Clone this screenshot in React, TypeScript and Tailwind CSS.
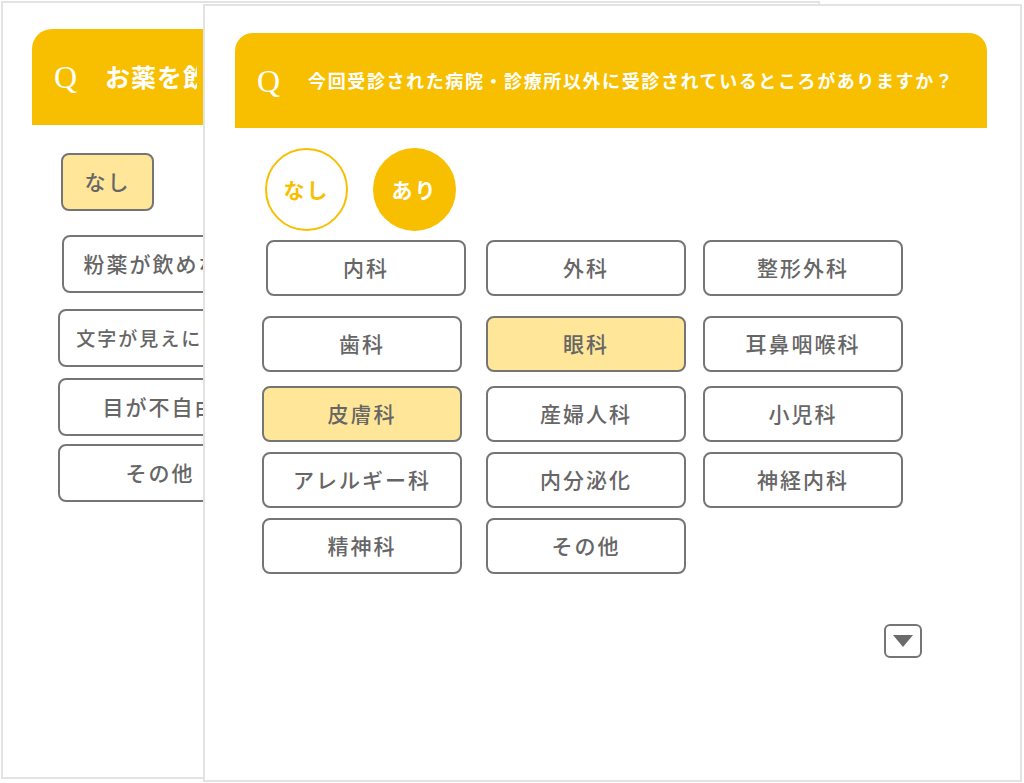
import React from "react";

const jp = "font-['Noto_Sans_CJK_JP','Noto_Sans',sans-serif]";

type Item = { label: string; on?: boolean };

const rows: { cls: string; items: Item[] }[] = [
  { cls: "mt-[9px] pl-[61px]", items: [{ label: "内科" }, { label: "外科" }, { label: "整形外科" }] },
  { cls: "mt-[20px] pl-[57px]", items: [{ label: "歯科" }, { label: "眼科", on: true }, { label: "耳鼻咽喉科" }] },
  { cls: "mt-[14px] pl-[57px]", items: [{ label: "皮膚科", on: true }, { label: "産婦人科" }, { label: "小児科" }] },
  { cls: "mt-[10px] pl-[57px]", items: [{ label: "アレルギー科" }, { label: "内分泌化" }, { label: "神経内科" }] },
  { cls: "mt-[10px] pl-[57px]", items: [{ label: "精神科" }, { label: "その他" }] },
];

function Choice({ label, on, className = "" }: Item & { className?: string }) {
  return (
    <div
      className={`h-[56px] w-[200px] rounded-[8px] border-2 border-[#757575] flex items-center justify-center text-[21px] tracking-[2px] font-medium text-[#666] ${
        on ? "bg-[#ffe699]" : "bg-white"
      } ${className}`}
    >
      {label}
    </div>
  );
}

function BackCard() {
  const items = [
    { label: "粉薬が飲めない", cls: "mt-[24px] ml-[59px] text-[21px]" },
    { label: "文字が見えにくい", cls: "mt-[16px] ml-[55px] text-[19px]" },
    { label: "目が不自由", cls: "mt-[11px] ml-[55px] text-[21px]" },
    { label: "その他", cls: "mt-[8px] ml-[55px] text-[21px]" },
  ];
  return (
    <div className={`absolute left-[1px] top-[1px] w-[819px] h-[778px] border-2 border-[#e3e3e3] bg-white ${jp}`}>
      <div className="mt-[26px] ml-[29px] mr-[33px] h-[96px] rounded-t-[20px] bg-[#f8bf00] flex items-center pl-[22px] text-white">
        <span className="font-['Liberation_Serif',serif] text-[32px] leading-none">Q</span>
        {/* only the start of this question shows; the front card covers the rest */}
        <span className="ml-[28px] w-[92px] overflow-hidden whitespace-nowrap text-[25px] font-bold tracking-[1px]">
          お薬を飲む
        </span>
      </div>
      <div className="mt-[28px] ml-[58px] h-[58px] w-[93px] rounded-[8px] border-2 border-[#757575] bg-[#ffe699] flex items-center justify-center text-[21px] tracking-[2px] font-medium text-[#666]">
        なし
      </div>
      {items.map((it) => (
        <div
          key={it.label}
          className={`h-[58px] w-[204px] rounded-[8px] border-2 border-[#757575] bg-white flex items-center justify-center tracking-[2px] font-medium text-[#666] whitespace-nowrap ${it.cls}`}
        >
          {it.label}
        </div>
      ))}
    </div>
  );
}

function FrontCard() {
  return (
    <div className={`absolute left-[203px] top-[4px] w-[819px] h-[778px] border-2 border-[#e3e3e3] bg-white flex flex-col ${jp}`}>
      <div className="mt-[27px] ml-[30px] mr-[33px] h-[95px] rounded-t-[18px] bg-[#f8bf00] flex items-center pl-[22px] text-white">
        <span className="font-['Liberation_Serif',serif] text-[32px] leading-none">Q</span>
        <span className="ml-[28px] text-[18px] font-bold tracking-[1.6px]">
          今回受診された病院・診療所以外に受診されているところがありますか？
        </span>
      </div>

      <div className="mt-[20px] ml-[60px] flex gap-[25px]">
        <div className="h-[83px] w-[83px] rounded-full border-2 border-[#f8bf00] bg-white flex items-center justify-center text-[21px] font-bold tracking-[2px] text-[#f8bf00]">
          なし
        </div>
        <div className="h-[83px] w-[83px] rounded-full bg-[#f8bf00] flex items-center justify-center text-[21px] font-bold tracking-[2px] text-white">
          あり
        </div>
      </div>

      {rows.map((r, i) => (
        <div key={i} className={`flex ${r.cls}`}>
          {r.items.map((it, j) => (
            <Choice
              key={it.label}
              {...it}
              className={j === 1 ? (i === 0 ? "ml-[20px]" : "ml-[24px]") : j === 2 ? "ml-[17px]" : ""}
            />
          ))}
        </div>
      ))}

      <div className="mt-[50px] ml-[679px] h-[34px] w-[38px] rounded-[6px] border-2 border-[#757575] bg-white flex items-center justify-center">
        <svg width="22" height="14" viewBox="0 0 22 14">
          <polygon points="1,1 21,1 11,13" fill="#6b6b6b" />
        </svg>
      </div>
    </div>
  );
}

export default function App() {
  return (
    <div className="relative w-[1024px] h-[783px] bg-white overflow-hidden">
      <BackCard />
      <FrontCard />
    </div>
  );
}
